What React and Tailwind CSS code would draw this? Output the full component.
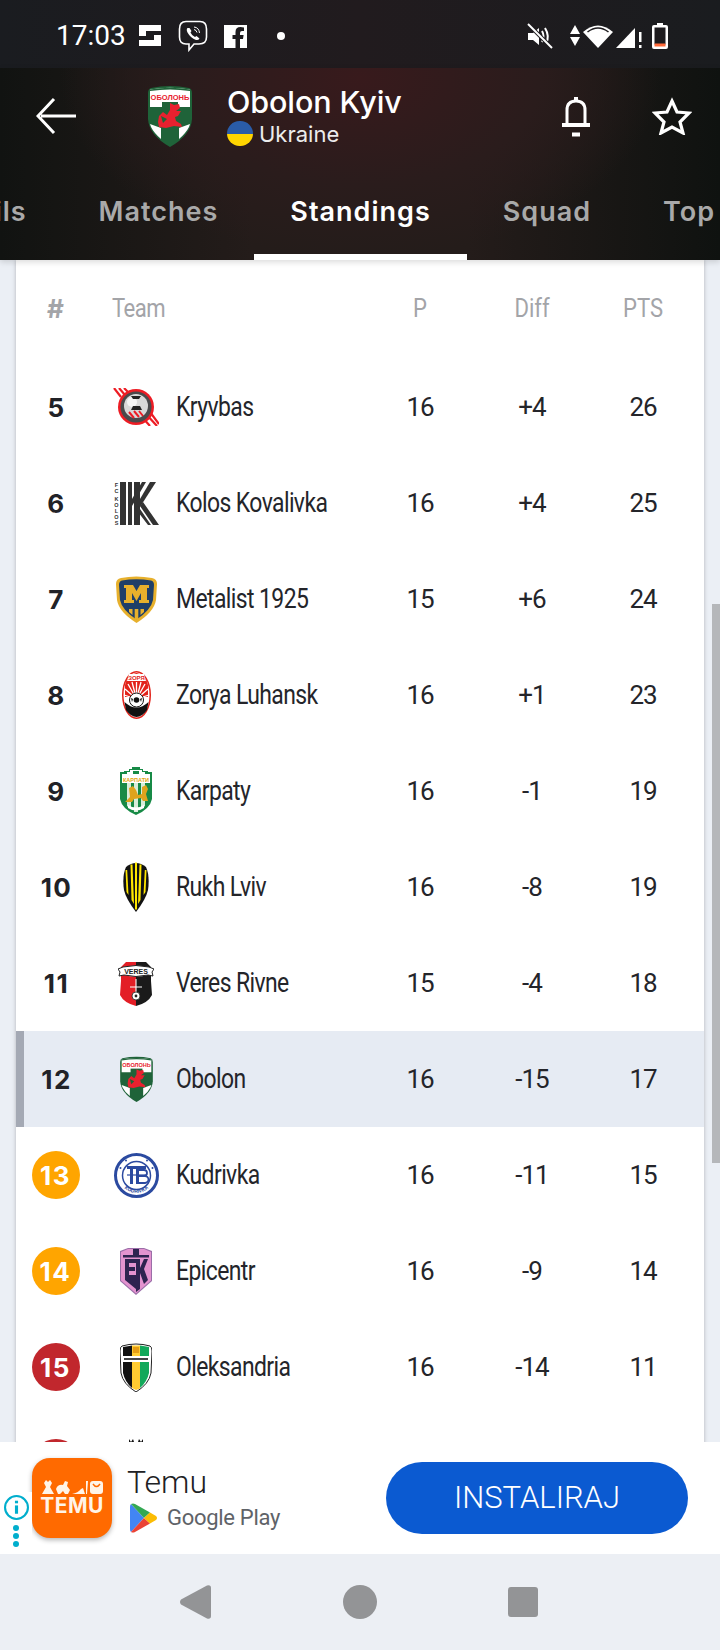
const TEAMS = [
  { rank: 5, name: 'Kryvbas', p: 16, diff: '+4', pts: 26, crest: Kryvbas },
  { rank: 6, name: 'Kolos Kovalivka', p: 16, diff: '+4', pts: 25, crest: Kolos },
  { rank: 7, name: 'Metalist 1925', p: 15, diff: '+6', pts: 24, crest: Metalist },
  { rank: 8, name: 'Zorya Luhansk', p: 16, diff: '+1', pts: 23, crest: Zorya },
  { rank: 9, name: 'Karpaty', p: 16, diff: '-1', pts: 19, crest: Karpaty },
  { rank: 10, name: 'Rukh Lviv', p: 16, diff: '-8', pts: 19, crest: Rukh },
  { rank: 11, name: 'Veres Rivne', p: 15, diff: '-4', pts: 18, crest: Veres },
  { rank: 12, name: 'Obolon', p: 16, diff: '-15', pts: 17, crest: ObolonSmall, active: true },
  { rank: 13, name: 'Kudrivka', p: 16, diff: '-11', pts: 15, crest: Kudrivka, badge: 'bg-[#ffa500]' },
  { rank: 14, name: 'Epicentr', p: 16, diff: '-9', pts: 14, crest: Epicentr, badge: 'bg-[#ffa500]' },
  { rank: 15, name: 'Oleksandria', p: 16, diff: '-14', pts: 11, crest: Oleksandria, badge: 'bg-[#c1272d]' },
  { rank: 16, name: '', p: '', diff: '', pts: '', crest: LastCrest, badge: 'bg-[#c1272d]' },
];

function ObolonCrest({ className }) {
  return (
    <svg viewBox="0 0 44 62" className={className}>
      <path d="M3 3 Q22 -1 41 3 Q44 4 44 8 L44 34 Q43 50 22 62 Q1 50 0 34 L0 8 Q0 4 3 3Z" fill="#1f6339" />
      <path d="M2 4.500 Q22 1 42 4.500 L42 22 L2 22Z" fill="#fff" />
      <path d="M2 4.500 Q22 1 42 4.500 L42 6 Q22 3 2 6Z" fill="#1f6339" />
      <path d="M14 17 h16 v6 h-16z" fill="#1f6339" />
      <path d="M2 39 L13 43 L13 54 Q6 48 3 42Z M42 39 L31 43 L31 54 Q38 48 41 42Z" fill="#fff" />
      <text x="22" y="14.500" textAnchor="middle" fontSize="7.500" fontWeight="700" fill="#e8212f" fontFamily="Liberation Sans">ОБОЛОНЬ</text>
      <path d="M22 18 L26 20 L31 19 L32 23 L28 26 L33 26 L30 31 L27 32 L28 36 L33 39 L34 42 L26 41 L18 43 L11 42 L10 37 L11 31 L15 27 L19 30 L22 25Z" fill="#e8212f" />
      <path d="M13 31 L19 34 L15 38Z" fill="#1f6339" />
    </svg>
  );
}

function ObolonSmall() {
  return <ObolonCrest className="w-[33px] h-[46px]" />;
}

function Kryvbas() {
  return (
    <svg viewBox="0 0 46 38" className="w-[46px] h-[38px]">
      <g stroke="#ed1c24" strokeWidth="2.2">
        <path d="M1 0 L8 9 M6 0 L12 7 M11 0 L15 4" />
        <path d="M29 29 L37 38 M33 26 L44 38 M37 24 L46 36" />
      </g>
      <circle cx="23" cy="19" r="18" fill="#ed1c24" />
      <circle cx="23" cy="19" r="15.500" fill="#4a4a4c" />
      <circle cx="23" cy="18" r="12" fill="#d9d9d9" />
      <circle cx="19" cy="14" r="5" fill="#f4f4f4" />
      <path d="M20 18 h7 l2 4 h-11z M18 8 h10 l-2 3 h-6z" fill="#222" />
      <path d="M16 24 l5 6 M21 23 l5 6 M26 23 l4 5" stroke="#ed1c24" strokeWidth="2" />
    </svg>
  );
}

function Kolos() {
  return (
    <svg viewBox="0 0 45 43" className="w-[45px] h-[43px]">
      <text x="2.500" y="5" textAnchor="middle" fontSize="5.500" fontWeight="700" fill="#333" fontFamily="Liberation Sans">F</text>
      <text x="2.500" y="10.500" textAnchor="middle" fontSize="5.500" fontWeight="700" fill="#333" fontFamily="Liberation Sans">C</text>
      <text x="2.500" y="19" textAnchor="middle" fontSize="5.500" fontWeight="700" fill="#333" fontFamily="Liberation Sans">K</text>
      <text x="2.500" y="25" textAnchor="middle" fontSize="5.500" fontWeight="700" fill="#333" fontFamily="Liberation Sans">O</text>
      <text x="2.500" y="31" textAnchor="middle" fontSize="5.500" fontWeight="700" fill="#333" fontFamily="Liberation Sans">L</text>
      <text x="2.500" y="37" textAnchor="middle" fontSize="5.500" fontWeight="700" fill="#333" fontFamily="Liberation Sans">O</text>
      <text x="2.500" y="42.500" textAnchor="middle" fontSize="5.500" fontWeight="700" fill="#333" fontFamily="Liberation Sans">S</text>
      <path d="M6 0 h6 v43 h-6z M14 0 h4 v43 h-4z M20 0 h6 v43 h-6z" fill="#333" />
      <path d="M18 17 L28 0 h4 L18 24Z" fill="#333" />
      <path d="M26 17 L36 0 h6 L26 25Z" fill="#333" />
      <path d="M26 24 L29 20 L45 43 h-6Z M21 26 L24 24 L37 43 h-3Z" fill="#333" />
    </svg>
  );
}

function Metalist() {
  return (
    <svg viewBox="0 0 41 47" className="w-[41px] h-[47px]">
      <path d="M5 2 Q20 -1 36 2 Q41 3 41 8 L40 24 Q38 36 20.500 47 Q3 36 1 24 L0 8 Q0 3 5 2Z" fill="#e7b02c" />
      <path d="M6 4.500 Q20 2 35 4.500 Q38 5 38 9 L37 24 Q35 34 20.500 43.500 Q6 34 4 24 L3 9 Q3 5 6 4.500Z" fill="#1f3f68" />
      <path d="M8 9 h9 l3.500 6 l3.500 -6 h9 v3 h-2 v12 h2 v3 h-10 v-3 h2 v-7 l-4.500 8 l-4.500 -8 v7 h2 v3 h-10 v-3 h2 v-12 h-2z" fill="#e7b02c" />
      <path d="M13 33 h3.500 v6 l-3.500 -3z M18.700 33 h3.600 v10 l-1.800 1 l-1.800 -1z M24.500 33 h3.500 v3 l-3.500 3z" fill="#e7b02c" />
    </svg>
  );
}

function Zorya() {
  return (
    <svg viewBox="0 0 29 48" className="w-[29px] h-[48px]">
      <ellipse cx="14.500" cy="24" rx="14.500" ry="24" fill="#e2231a" />
      <ellipse cx="14.500" cy="24" rx="13" ry="22.500" fill="#fff" />
      <path d="M14.500 2 Q24 3 26 14 L26 26 L3 26 L3 14 Q5 3 14.500 2Z" fill="#e2231a" />
      <g stroke="#fff" strokeWidth="1.300">
        <path d="M14.500 28 L14.500 11 M14.500 28 L10 11 M14.500 28 L19 11 M14.500 28 L6 13 M14.500 28 L23 13 M14.500 28 L3 18 M14.500 28 L26 18 M14.500 28 L2 24 M14.500 28 L27 24" />
      </g>
      <path d="M7 3 h15 l2 7 h-19z" fill="#fff" />
      <text x="14.500" y="9" textAnchor="middle" fontSize="6" fontWeight="700" fill="#e2231a" fontFamily="Liberation Sans">ЗОРЯ</text>
      <path d="M2.500 31 Q14.500 42 26.500 31 L25 39 Q20 46 14.500 46 Q9 46 4 39Z" fill="#111" />
      <circle cx="14.500" cy="29" r="7" fill="#fff" stroke="#111" strokeWidth="1" />
      <circle cx="14.500" cy="29" r="2.800" fill="#111" />
      <path d="M9 27 l2 1 -1 3z M20 27 l-2 1 1 3z" fill="#111" />
    </svg>
  );
}

function Karpaty() {
  return (
    <svg viewBox="0 0 32 48" className="w-[32px] h-[48px]">
      <path d="M0 5 h4 v-1 h5 v-2 h3 v-2 h8 v2 h3 v2 h5 v1 h4 v27 Q30 42 16 48 Q2 42 0 32Z" fill="#178a46" />
      <path d="M2 7 h5 v-2 h3 v-2 h12 v2 h3 v2 h5 v9 h-28z" fill="#fff" />
      <path d="M13 4 h6 v3 h-6z" fill="#178a46" />
      <text x="16" y="14.500" textAnchor="middle" fontSize="5.500" fontWeight="700" fill="#e5a50a" fontFamily="Liberation Sans">КАРПАТИ</text>
      <path d="M2 16 h28 v16 Q28 41 16 46 Q4 41 2 32Z" fill="#178a46" />
      <path d="M7 16 h4 v26 l-4 -3z M14 16 h4 v29 h-4z M21 16 h4 v23 l-4 3z" fill="#d7ecd9" />
      <path d="M5 35 L10 30 L9 21 L13 19 L16 23 L18 28 L22 27 L22 20 L26 18 L28 22 L26 27 L28 34 L23 34 L21 31 L14 32 L12 35Z" fill="#dfa31d" />
      <path d="M8 38 Q16 43 24 38 L24 41 Q16 46 8 41Z" fill="#fff" />
    </svg>
  );
}

function Rukh() {
  return (
    <svg viewBox="0 0 26 50" className="w-[26px] h-[50px]">
      <path d="M3 5 Q13 -3 23 5 Q27 14 25 28 Q23 37 13 50 Q3 37 1 28 Q-1 14 3 5Z" fill="#111" />
      <path d="M7.500 2.500 h2 L11 42 L8.500 38 Z M12 0.500 h2 v47 h-2z M16.500 2.500 h2 L17.500 38 L15 42 Z M2.500 8 h1.700 L5.500 33 L3.500 30Z M21.800 8 h1.700 L22.500 30 L20.500 33Z" fill="#ffe600" />
    </svg>
  );
}

function Veres() {
  return (
    <svg viewBox="0 0 36 45" className="w-[36px] h-[45px]">
      <path d="M3 6 L8 1 L18 1 L18 45 Q6 42 2 34 L3 20Z" fill="#e31e26" />
      <path d="M33 6 L28 1 L18 1 L18 45 Q30 42 34 34 L33 20Z" fill="#1a1a1a" />
      <path d="M0 8 L5 6 Q18 3 31 6 L36 8 L34 11 L35 15 L30 14 Q18 17 6 14 L1 15 L2 11Z" fill="#fff" stroke="#222" strokeWidth="1" />
      <text x="18" y="13" textAnchor="middle" fontSize="7" fontWeight="700" fill="#222" fontFamily="Liberation Sans">VERES</text>
      <path d="M18 18 v18 M12 26 h12" stroke="#fff" strokeWidth="1.100" />
      <circle cx="18" cy="35" r="4" fill="#fff" stroke="#222" strokeWidth="0.8" />
      <circle cx="18" cy="35" r="1.400" fill="#222" />
    </svg>
  );
}

function Kudrivka() {
  return (
    <svg viewBox="0 0 45 45" className="w-[45px] h-[45px]">
      <circle cx="22.500" cy="22.500" r="21" fill="#fff" stroke="#2b4aa0" strokeWidth="3" />
      <circle cx="22.500" cy="22.500" r="14" fill="#fff" stroke="#2b4aa0" strokeWidth="1.500" />
      <path id="kudrivka-arc" d="M5 26 A18 18 0 0 0 40 26" fill="none" />
      <text fontSize="5" fontWeight="700" fill="#2b4aa0" fontFamily="Liberation Sans" textAnchor="middle"><textPath href="#kudrivka-arc" startOffset="50%">KUDRIVKA</textPath></text>
      <path d="M13 13 h19 v3 h-19z M16 16 h3 v15 h-3z M22 16 h3 v15 h-3z" fill="#2b4aa0" />
      <path d="M25 17 h5 a3 3 0 0 1 0 6 h-5 M25 23 h6 a3.500 3.500 0 0 1 0 7 h-6" fill="none" stroke="#2b4aa0" strokeWidth="1.800" />
      <path d="M13 22 h19" stroke="#2b4aa0" strokeWidth="1.200" />
      <circle cx="6.500" cy="15" r="1" fill="#2b4aa0" /><circle cx="38.500" cy="15" r="1" fill="#2b4aa0" />
      <circle cx="12" cy="7.500" r="1" fill="#2b4aa0" /><circle cx="33" cy="7.500" r="1" fill="#2b4aa0" />
    </svg>
  );
}

function Epicentr() {
  return (
    <svg viewBox="0 0 32 48" className="w-[32px] h-[48px]">
      <path d="M0 4 L8 1 L24 1 L32 4 L32 34 L16 48 L0 34Z" fill="#9a6ea8" />
      <path d="M1 5 L8 2 L24 2 L31 5 L31 33.500 L16 46.500 L1 33.500Z" fill="#e393cf" />
      <path d="M3 8 h26 v2.500 h-26z M13 2 h6 v6 h-6z" fill="#2e2350" />
      <path d="M5 12 h11 v4 h-7 v4 h6 v4 h-6 v4 h7 v14 L5 33Z" fill="#2e2350" />
      <path d="M16 12 h4 v9 L24 12 h4 L24 22 L28 33 L24 37 L20 26 V42 L16 45Z" fill="#2e2350" />
    </svg>
  );
}

function Oleksandria() {
  return (
    <svg viewBox="0 0 32 49" className="w-[32px] h-[49px]">
      <path d="M2 3 Q16 -1 30 3 Q32 4 32 8 L31 30 Q29 41 16 49 Q3 41 1 30 L0 8 Q0 4 2 3Z" fill="#fff" stroke="#222" strokeWidth="1" />
      <path d="M3 4 Q8 3 12 2.500 V45 Q5 39 3 30Z" fill="#111" />
      <path d="M20 2.500 Q25 3 29 4 L29 30 Q27 39 20 45Z" fill="#12a85a" />
      <path d="M12 2.500 h8 v43 L16 47 L12 45Z" fill="#ffcb31" />
      <path d="M3 13 h26 v6 h-26z" fill="#fff" />
      <path d="M4 15 h24 v2 h-24z" fill="#444" />
      <path d="M13 4 h6 v6 h-6z" fill="#e59d15" />
    </svg>
  );
}

function LastCrest() {
  return (
    <svg viewBox="0 0 32 48" className="w-[32px] h-[48px]">
      <path d="M9 0 l2 3 l2 -3 l1 3 h4 l1 -3 l2 3 l2 -3 v6 H9z" fill="#111" />
      <path d="M3 6 h26 v26 Q27 42 16 48 Q5 42 3 32Z" fill="#111" />
    </svg>
  );
}

function StatusBar() {
  return (
    <div className="h-[68px] flex items-center justify-between pl-[56px] pr-[52px] pt-[4px] bg-[linear-gradient(90deg,#1a1c20_0%,#211b1e_50%,#1a1c1f_100%)] text-white">
      <div className="flex items-center">
        <span className="text-[28px] leading-none font-['Roboto',sans-serif]">17:03</span>
        <svg viewBox="0 0 22 22" className="w-[22px] h-[22px] ml-[13px]" fill="#fff">
          <path d="M0 0 H22 V6 H7 V11 H0Z" />
          <path d="M22 21 H0 V15 H15 V10 H22Z" />
        </svg>
        <svg viewBox="0 0 30 32" className="w-[30px] h-[32px] ml-[17px]" fill="none" stroke="#fff">
          <path d="M8 1.500 h14 Q28.500 1.500 28.500 9 v8 Q28.500 24 21 24 H16 L11 30 V24 H8 Q1.500 24 1.500 17 V9 Q1.500 1.500 8 1.500Z" strokeWidth="1.600" />
          <path d="M9.500 8 Q8 9.500 9.500 12.500 Q12.500 18 18 20 Q20.500 20.500 21.500 18.500 L18.500 16 L17 17 Q14 16 12.500 12.500 L13.500 11 L11.500 8Z" fill="#fff" stroke="none" />
          <path d="M16 7 Q21 7.500 21.500 13 M16 9.500 Q18.500 10 19 12.500" strokeWidth="1" />
        </svg>
        <svg viewBox="0 0 24 24" className="w-[24px] h-[24px] ml-[16px]">
          <path d="M0 1 h23 v23 H0z" fill="#fff" />
          <path d="M16 24 V15 h3 l.6 -4 H16 V9 Q16 7 18 7 h2 V3.500 Q18 3 16.500 3 Q11.500 3 11.500 8 v3 H8.500 v4 h3 v9z" fill="#1d1b1e" />
        </svg>
        <span className="w-[8px] h-[8px] rounded-full bg-white ml-[29px]" />
      </div>
      <div className="flex items-center">
        <svg viewBox="0 0 26 26" className="w-[26px] h-[26px]">
          <path d="M1 10 h5 l6 -5 v17 l-6 -5 H1z" fill="#fff" />
          <path d="M15 8 Q18 13 15 19 M18 5 Q23 13 19 21" fill="none" stroke="#fff" strokeWidth="2" />
          <path d="M1 1 L25 25" stroke="#1d1b1e" strokeWidth="4" />
          <path d="M1 1 L25 25" stroke="#fff" strokeWidth="2" />
        </svg>
        <svg viewBox="0 0 10 22" className="w-[10px] h-[22px] ml-[17px]" fill="#fff">
          <path d="M5 0 L10 9 H0z M0 12 H10 L5 21z" />
        </svg>
        <svg viewBox="0 0 30 26" className="w-[30px] h-[26px] ml-[3px]" fill="#fff">
          <path d="M15 25 L0 9 Q15 -4 30 9Z" />
          <path d="M4 8.500 Q15 0 26 8.500 L25 9.500 Q15 2 5 9.500Z" fill="#1d1b1e" />
        </svg>
        <svg viewBox="0 0 26 26" className="w-[26px] h-[26px] ml-[3px]" fill="#fff">
          <path d="M0 25 L19 5 V25Z" />
          <path d="M23 9 h2.500 v10 h-2.500z M23 22 h2.500 v3 h-2.500z" />
        </svg>
        <svg viewBox="0 0 16 26" className="w-[16px] h-[26px] ml-[10px]">
          <path d="M5 0 h6 v2 h3 q2 0 2 2 v20 q0 2 -2 2 H2 q-2 0 -2 -2 V4 q0 -2 2 -2 h3z" fill="#fff" />
          <path d="M2.500 4.500 h11 v17 h-11z" fill="#1d1b1e" />
          <path d="M2.500 20.500 h11 v3 h-11z" fill="#ff6a3a" />
        </svg>
      </div>
    </div>
  );
}

function Header() {
  return (
    <header className="relative z-10 h-[192px] overflow-hidden bg-[radial-gradient(ellipse_300px_180px_at_50%_10px,#381a1c_0%,#2a1c1c_60%,rgba(36,28,26,0)_100%),linear-gradient(90deg,#111311_0%,#241c1a_35%,#241c1a_65%,#0f1210_100%)] text-white shadow-[0_2px_6px_rgba(0,0,0,0.15)]">
      <div className="h-[96px] flex items-center">
        <svg viewBox="0 0 40 38" className="w-[40px] h-[38px] ml-[36px]" fill="none" stroke="#fff" strokeWidth="3">
          <path d="M18 2 L2 19 L18 36 M5 19 H40" />
        </svg>
        <ObolonCrest className="w-[44px] h-[62px] ml-[72px]" />
        <div className="ml-[35px] flex flex-col">
          <span className="text-[30.500px] leading-[36px] mt-[-2px] font-medium tracking-[-0.1px] font-['Inter',sans-serif]">Obolon Kyiv</span>
          <div className="flex items-center mt-[1px]">
            <span className="w-[26px] h-[25px] rounded-full overflow-hidden flex flex-col">
              <span className="h-1/2 bg-[#2a5ca8]" />
              <span className="h-1/2 bg-[#ffd500]" />
            </span>
            <span className="ml-[6px] text-[22px] leading-[26px] font-['Inter',sans-serif] text-[#ececec]">Ukraine</span>
          </div>
        </div>
        <svg viewBox="0 0 30 42" className="w-[30px] h-[42px] ml-auto" fill="none" stroke="#fff">
          <path d="M15 2 v4" strokeWidth="4" />
          <path d="M6 30 V15 Q6 6 15 6 Q24 6 24 15 V30" strokeWidth="3" />
          <path d="M1 30 h28" strokeWidth="4" />
          <path d="M11 39.500 h8" strokeWidth="4" />
        </svg>
        <svg viewBox="0 0 40 38" className="w-[40px] h-[38px] ml-[61px] mr-[28px]" fill="none" stroke="#fff" strokeWidth="3.200">
          <path d="M20 4 L25 15 L37 16 L28 25 L31 36 L20 30 L9 36 L12 25 L3 16 L15 15Z" />
        </svg>
      </div>
      <nav className="flex h-[96px] ml-[-106px] whitespace-nowrap text-[27px] font-semibold tracking-[1px] font-['Inter',sans-serif] text-[#a9a9a9]">
        <div className="px-9 pt-[28px]">Details</div>
        <div className="px-9 pt-[28px]">Matches</div>
        <div className="px-9 pt-[28px] text-white border-b-[6px] border-white">Standings</div>
        <div className="px-9 pt-[28px]">Squad</div>
        <div className="px-9 pt-[28px]">Top</div>
      </nav>
    </header>
  );
}

function Row({ team }) {
  const Crest = team.crest;
  return (
    <div className={`flex items-center h-[96px] pr-[6px] ${team.active ? 'bg-[#e6ebf3] shadow-[inset_8px_0_0_#a4a9b4]' : ''}`}>
      <div className="w-[79px] flex justify-center">
        {team.badge ? (
          <span className={`w-[48px] h-[48px] rounded-full flex items-center justify-center text-white text-[26px] font-bold tracking-[1.5px] ${team.badge}`}>{team.rank}</span>
        ) : (
          <span className="ml-[2px] text-[26px] font-bold tracking-[1.5px] text-[#212227]">{team.rank}</span>
        )}
      </div>
      <div className="w-[82px] flex justify-center"><Crest /></div>
      <div className="flex-1 ml-[-1px]">
        <span className="block origin-left scale-x-[0.85] whitespace-nowrap text-[27px] tracking-[-0.7px] text-[#24252a] font-['Roboto',sans-serif]">{team.name}</span>
      </div>
      <div className="w-[112px] text-center text-[26px] tracking-[-1px] text-[#24252a] font-['Roboto',sans-serif]">{team.p}</div>
      <div className="w-[112px] text-center text-[26px] tracking-[-1px] text-[#24252a] font-['Roboto',sans-serif]">{team.diff}</div>
      <div className="w-[110px] text-center text-[26px] tracking-[-1px] text-[#24252a] font-['Roboto',sans-serif]">{team.pts}</div>
    </div>
  );
}

function Table() {
  return (
    <main className="relative flex-1 overflow-hidden px-4 bg-[#ebeff5]">
      <div className="bg-white shadow-[0_0_4px_rgba(0,0,0,0.25)] font-['Inter',sans-serif]">
        <div className="flex items-center h-[99px] pr-[6px] pb-[2px] text-[#a3a4a8]">
          <div className="w-[79px] text-center text-[26px] font-bold">#</div>
          <div className="w-[82px] pl-[17px]">
            <span className="block origin-left scale-x-[0.85] text-[26px] tracking-[-0.6px] font-['Roboto',sans-serif]">Team</span>
          </div>
          <div className="flex-1" />
          <div className="w-[112px] text-center text-[26px] scale-x-[0.85] font-['Roboto',sans-serif]">P</div>
          <div className="w-[112px] text-center text-[26px] scale-x-[0.85] font-['Roboto',sans-serif]">Diff</div>
          <div className="w-[110px] text-center text-[26px] scale-x-[0.85] font-['Roboto',sans-serif]">PTS</div>
        </div>
        {TEAMS.map((team) => (
          <Row key={team.rank} team={team} />
        ))}
      </div>
      <div className="absolute right-0 top-[344px] w-[8px] h-[559px] bg-[#b5b7ba]" />
    </main>
  );
}

function AdBanner() {
  return (
    <div className="relative h-[112px] flex items-center bg-white pl-[32px] pr-[32px]">
      <div className="w-[80px] h-[80px] rounded-[18px] bg-[#ff6a00] shadow-[0_2px_5px_rgba(0,0,0,0.3)] flex flex-col items-center justify-center text-[#fff4e8]">
        <svg viewBox="0 0 62 14" className="w-[62px] h-[14px]" fill="#fff4e8">
          <path d="M1 14 L5 7 L3 3 L5 0 L7 2 L9 0 L11 3 L9 7 L13 14Z" />
          <path d="M15 9 Q17 4 22 5 L24 1 L27 2 L26 6 L29 10 L27 14 H24 L22 11 L19 14 H17Z" />
          <path d="M31 14 Q37 13 40 9 L42 8 L44 14Z M45 14 V1 H47 L46 14Z" />
          <path d="M49 4 Q49 1 52 1 H59 Q62 1 62 4 V11 Q62 14 59 14 H52 Q49 14 49 11Z" />
          <path d="M52 4 Q55.500 9 59 4" fill="none" stroke="#ff6a00" strokeWidth="1.500" />
        </svg>
        <span className="text-[21px] leading-[22px] mt-[1px] font-bold tracking-[0.4px] font-['Inter',sans-serif]">TEMU</span>
      </div>
      <div className="ml-[15px] flex flex-col">
        <span className="text-[32px] leading-[36px] font-light text-[#202124] font-['Roboto',sans-serif]">Temu</span>
        <div className="flex items-center mt-[3px] ml-[3px]">
          <svg viewBox="0 0 28 30" className="w-[28px] h-[30px]">
            <path d="M1 1 L14 15 L1 29 Q0 28 0 26 V4 Q0 2 1 1Z" fill="#4285f4" />
            <path d="M1 1 Q3 0 5 1 L20 9.500 L14 15Z" fill="#34a853" />
            <path d="M1 29 Q3 30 5 29 L20 20.500 L14 15Z" fill="#ea4335" />
            <path d="M20 9.500 L26 13 Q28 15 26 17 L20 20.500 L14 15Z" fill="#fbbc04" />
          </svg>
          <span className="ml-[9px] text-[22px] leading-[30px] tracking-[-0.3px] text-[#5f6368] font-['Roboto',sans-serif]">Google Play</span>
        </div>
      </div>
      <div className="ml-auto w-[302px] h-[72px] rounded-full bg-[#0b5ad1] flex items-center justify-center text-white text-[31px] font-light font-['Roboto',sans-serif]">INSTALIRAJ</div>
      <div className="absolute left-0 bottom-[2px] w-[32px] h-[60px] bg-white flex flex-col items-center">
        <svg viewBox="0 0 24 24" className="w-[25px] h-[25px] mt-[3px]" fill="none" stroke="#00aecd" strokeWidth="2">
          <circle cx="12" cy="12" r="11" />
          <path d="M12 10 v8" strokeWidth="3" />
          <path d="M12 5.500 v2.500" strokeWidth="3" />
        </svg>
        <span className="w-[6px] h-[6px] rounded-full bg-[#00aecd] mt-[5px]" />
        <span className="w-[6px] h-[6px] rounded-full bg-[#00aecd] mt-[2px]" />
        <span className="w-[6px] h-[6px] rounded-full bg-[#00aecd] mt-[2px]" />
      </div>
    </div>
  );
}

function NavBar() {
  return (
    <div className="h-[96px] flex items-center bg-[#eceff4] pl-[180px]">
      <svg viewBox="0 0 31 34" className="w-[31px] h-[34px]" fill="#939496">
        <path d="M1 14.500 L27 0.500 Q31 -0.500 31 3 V31 Q31 34.500 27 33.500 L1 19.500 Q-1 17 1 14.500Z" />
      </svg>
      <span className="w-[34px] h-[34px] rounded-full bg-[#939496] ml-[132px]" />
      <span className="w-[30px] h-[30px] rounded-[3px] bg-[#939496] ml-[131px]" />
    </div>
  );
}

export default function App() {
  return (
    <div className="w-[720px] h-[1650px] flex flex-col overflow-hidden bg-[#ebeff5]">
      <StatusBar />
      <Header />
      <Table />
      <AdBanner />
      <NavBar />
    </div>
  );
}
